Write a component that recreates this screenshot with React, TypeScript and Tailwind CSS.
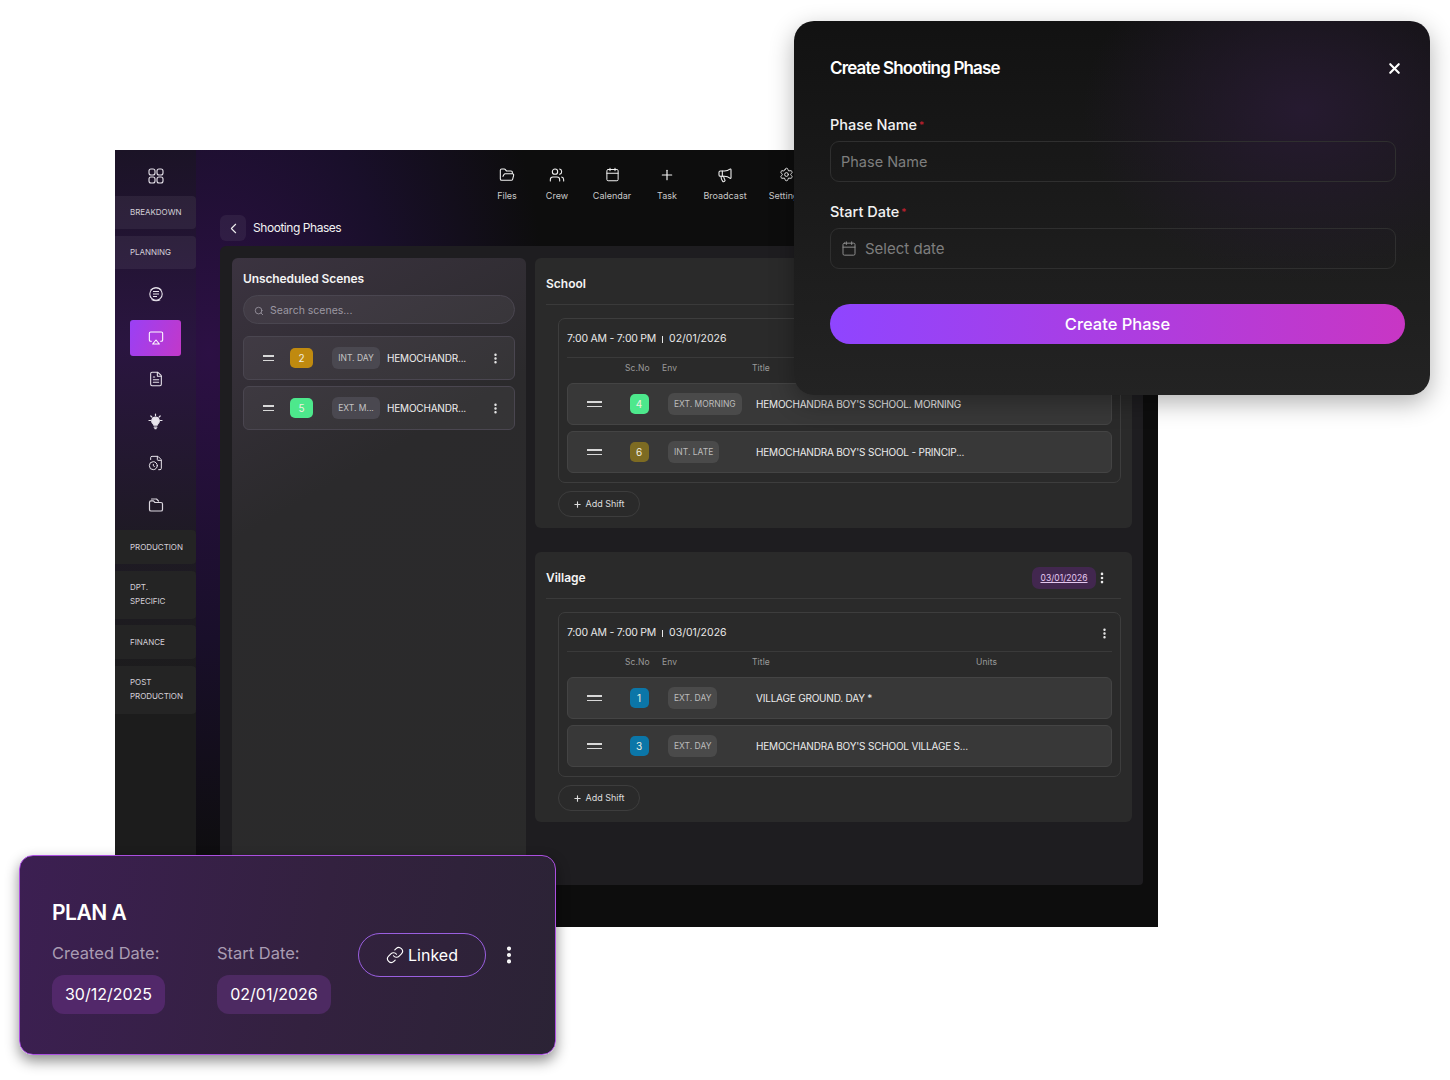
import { Airplay, Calendar, ChevronLeft, FileClock, FileText, FolderOpen, Link, Megaphone, MoreVertical, Plus, Search, Settings, Users, X } from "lucide-react";

type Scene = { no: string; color: string; env: string; title: string };

function Handle({ w }: { w: string }) {
  return (
    <div className={`${w} flex flex-col gap-[3px] shrink-0`}>
      <div className="h-[1.5px] bg-[#d8d8d8]" />
      <div className="h-[1.5px] bg-[#d8d8d8]" />
    </div>
  );
}

function SideLabel({ lines, tint }: { lines: string[]; tint?: boolean }) {
  return (
    <div className={`w-[81px] flex flex-col justify-center gap-[3px] pl-[15px] rounded-r-sm text-[8px] leading-[11px] tracking-[-0.05px] text-[#d4d0d8] ${tint ? "py-[11px] bg-[#ffffff10]" : "py-[11.5px] bg-[#242424]"}`}>
      {lines.map((l) => (
        <span key={l}>{l}</span>
      ))}
    </div>
  );
}

function SideIcon({ children, active }: { children: React.ReactNode; active?: boolean }) {
  return (
    <div className={`w-[51px] ml-[15px] flex items-center justify-center text-[#e8e4ec] ${active ? "h-[36px] rounded-[3px] -mt-[5px] -mb-[8px] bg-[linear-gradient(110deg,#9a40f5,#c238c9)]" : "h-[22px]"}`}>
      {children}
    </div>
  );
}

function NavItem({ icon, label, w }: { icon: React.ReactNode; label: string; w: string }) {
  return (
    <div className={`${w} flex flex-col items-center gap-[8px] text-[9px] leading-[12px] text-[#c9c9c9] shrink-0`}>
      <div className="h-[15px] flex items-center text-[#f2f2f2]">{icon}</div>
      <span>{label}</span>
    </div>
  );
}

function SceneRow({ s }: { s: Scene }) {
  return (
    <div className="h-[42px] flex items-center rounded-[6px] border border-[#444444] bg-[#383838] pl-[19px]">
      <Handle w="w-[15px]" />
      <div className="w-[66px] flex justify-center shrink-0 pl-[8px]">
        <div className={`w-[19px] h-[20px] rounded-[5px] flex items-center justify-center text-[10px] text-[#f1efe0] ${s.color}`}>{s.no}</div>
      </div>
      <div className="w-[88px] shrink-0 flex items-center">
        <span className="h-[22px] flex items-center px-[6px] rounded-[6px] bg-[#4a4a4a] text-[8.5px] text-[#bcbcbc] whitespace-nowrap">{s.env}</span>
      </div>
      <span className="text-[10px] tracking-[-0.2px] text-[#ececec] whitespace-nowrap">{s.title}</span>
    </div>
  );
}

function Section({ title, date, time, day, scenes }: { title: string; date?: string; time: string; day: string; scenes: Scene[] }) {
  return (
    <section className="h-[270px] rounded-[6px] bg-[#2a2a2a] px-[11px]">
      <div className="h-[47px] flex items-center border-b border-[#3a3a3a] pt-[6px]">
        <h3 className="text-[12px] font-semibold text-[#f4f4f4]">{title}</h3>
        {date && (
          <div className="ml-auto flex items-center mr-[12px]">
            <span className="w-[64px] h-[22px] flex items-center justify-center rounded-[7px] bg-[#42274f] text-[8.5px] tracking-[0.05px] text-[#e4c8f0] underline">{date}</span>
            <MoreVertical className="-ml-[1px] w-[14px] h-[14px] text-[#eee]" strokeWidth={2.5} />
          </div>
        )}
      </div>
      <div className="mt-[13px] w-[563px] ml-[12px] rounded-[7px] border border-[#3d3d3d] px-[8px] pb-[9px]">
        <div className="h-[39px] pt-[2px] flex items-center border-b border-[#3a3a3a] text-[10.5px] text-[#e8e8e8]">
          <span className="tracking-[-0.25px]">{time}</span>
          <span className="ml-[6px] w-[1px] h-[7px] bg-[#e8e8e8]" />
          <span className="ml-[6px]">{day}</span>
          <MoreVertical className="w-[13px] h-[13px] ml-auto mr-[1px] text-[#eee]" strokeWidth={2.5} />
        </div>
        <div className="h-[25px] pt-[4px] flex text-[8.5px] leading-[12px] tracking-[0.1px] text-[#9a9a9a]">
          <span className="ml-[58px] w-[37px]">Sc.No</span>
          <span className="w-[90px]">Env</span>
          <span className="w-[224px]">Title</span>
          <span>Units</span>
        </div>
        <div className="flex flex-col gap-[6px]">
          {scenes.map((s) => (
            <SceneRow key={s.no} s={s} />
          ))}
        </div>
      </div>
      <button className="mt-[8px] ml-[12px] h-[26px] w-[82px] flex items-center justify-center gap-[3px] rounded-full border border-[#3d3d3d] text-[9px] text-[#dddddd]">
        <Plus className="w-[9px] h-[9px]" strokeWidth={3} />
        Add Shift
      </button>
    </section>
  );
}

function Unscheduled({ no, color, env }: { no: string; color: string; env: string }) {
  return (
    <div className="h-[44px] flex items-center rounded-[6px] border border-[#4a4650] bg-[#ffffff0d] pl-[19px] pr-[12px]">
      <Handle w="w-[11px]" />
      <div className={`ml-[16px] w-[23px] h-[20px] rounded-[5px] flex items-center justify-center text-[10px] text-[#f1efe0] shrink-0 ${color}`}>{no}</div>
      <span className="ml-[19px] w-[48px] h-[22px] flex items-center justify-center rounded-[6px] bg-[#4a4850] text-[8.5px] text-[#c4c4c4] whitespace-nowrap shrink-0">{env}</span>
      <span className="ml-[7px] text-[10px] tracking-[-0.2px] text-[#efefef] whitespace-nowrap">HEMOCHANDR...</span>
      <MoreVertical className="ml-auto w-[13px] h-[13px] text-[#eee]" strokeWidth={2.5} />
    </div>
  );
}

function ModalField({ label, children }: { label: string; children: React.ReactNode }) {
  return (
    <div className="w-[566px]">
      <label className="block h-[20px] text-[14.5px] leading-[20px] font-medium text-[#f2f2f2]">
        {label}
        <span className="text-[#c0202f] text-[10px] align-top ml-[2px]">*</span>
      </label>
      <div className="mt-[6px] h-[41px] flex items-center gap-[8px] px-[10px] rounded-[9px] border border-[#2f2f2f] text-[14.5px] text-[#7e7e7e]">
        {children}
      </div>
    </div>
  );
}

export default function App() {
  return (
    <div className="relative w-[1450px] h-[1080px] overflow-hidden bg-white font-['Inter','Liberation_Sans',sans-serif]">
      {/* app window */}
      <div className="absolute left-[115px] top-[150px] w-[1043px] h-[777px] flex overflow-hidden bg-[radial-gradient(ellipse_340px_520px_at_9%_26%,#2c1044_0%,#190f2a_55%,#0d0d0d_100%)]">
        <aside className="w-[81px] shrink-0 pt-[18px] flex flex-col bg-[linear-gradient(180deg,#1b1326_0%,#2a1540_25%,#1e1a24_50%,#1c1c1c_70%)]">
          <div className="h-[28px] w-[81px] flex justify-center">
            <svg width="16" height="16" viewBox="0 0 16 16" fill="none" stroke="#e8e4ec" strokeWidth="1.1">
              <rect x="1" y="1" width="6" height="6" rx="2" />
              <rect x="9" y="1" width="6" height="6" rx="2" />
              <rect x="1" y="9" width="6" height="6" rx="2" />
              <rect x="9" y="9" width="6" height="6" rx="2" />
            </svg>
          </div>
          <SideLabel lines={["BREAKDOWN"]} tint />
          <div className="h-[7px]" />
          <SideLabel lines={["PLANNING"]} tint />
          <div className="flex flex-col gap-[20px] mt-[14px]">
            <SideIcon>
              <svg width="16" height="16" viewBox="0 0 16 16" fill="none" stroke="currentColor" strokeWidth="1.1">
                <circle cx="8" cy="8" r="6.2" />
                <path d="M5 5.5h6M5 8h6M5 10.5h4M2.6 4c2.4-2.8 8-3 10.6-.2M3.6 13.4c2.4 1.4 6 1.6 8.6.4" />
              </svg>
            </SideIcon>
            <SideIcon active>
              <Airplay className="w-[16px] h-[16px] text-white" strokeWidth={1.6} />
            </SideIcon>
            <SideIcon>
              <FileText className="w-[16px] h-[16px]" strokeWidth={1.6} />
            </SideIcon>
            <SideIcon>
              <svg width="17" height="17" viewBox="0 0 17 17" fill="none" stroke="#e8e4ec" strokeWidth="1.2" strokeLinecap="round">
                <path d="M8.5 1v1.6M2 7.5h1.8M13.2 7.5H15M3.8 3l1.2 1.2M13.2 3 12 4.2" />
                <path d="M8.5 4.2a3.7 3.7 0 0 0-2.2 6.7c.4.3.6.7.6 1.2h3.2c0-.5.2-.9.6-1.2a3.7 3.7 0 0 0-2.2-6.7z" fill="#e8e4ec" />
                <path d="M7.2 14.2h2.6M7.8 15.6h1.4" />
              </svg>
            </SideIcon>
            <SideIcon>
              <FileClock className="w-[16px] h-[16px]" strokeWidth={1.5} />
            </SideIcon>
            <SideIcon>
              <svg width="16" height="16" viewBox="0 0 16 16" fill="none" stroke="#dcd8e0" strokeWidth="1.2" strokeLinejoin="round">
                <path d="M1.5 5.5c0-1 .6-1.6 1.5-1.6h2.4l1.6 1.6h6c1 0 1.5.6 1.5 1.5v5.4c0 1-.6 1.6-1.5 1.6H3c-.9 0-1.5-.6-1.5-1.6z" />
                <path d="M3.5 2h5l2 2" strokeLinecap="round" />
              </svg>
            </SideIcon>
          </div>
          <div className="flex flex-col gap-[6.5px] mt-[14px]">
            <SideLabel lines={["PRODUCTION"]} />
            <SideLabel lines={["DPT.", "SPECIFIC"]} />
            <SideLabel lines={["FINANCE"]} />
            <SideLabel lines={["POST", "PRODUCTION"]} />
          </div>
        </aside>

        <main className="flex-1 min-w-0 pl-[24px]">
          <div className="h-[96px] relative">
            <div className="flex pt-[17px] pl-[267px]">
              <NavItem w="w-[40px]" label="Files" icon={<FolderOpen className="w-[16px] h-[16px]" strokeWidth={1.6} />} />
              <NavItem w="w-[60px]" label="Crew" icon={<Users className="w-[16px] h-[16px]" strokeWidth={1.6} />} />
              <NavItem w="w-[50px]" label="Calendar" icon={<Calendar className="w-[15px] h-[15px]" strokeWidth={1.6} />} />
              <NavItem w="w-[60px]" label="Task" icon={<Plus className="w-[16px] h-[16px]" strokeWidth={1.8} />} />
              <NavItem w="w-[56px]" label="Broadcast" icon={<Megaphone className="w-[16px] h-[16px]" strokeWidth={1.6} />} />
              <NavItem w="w-[66px]" label="Settings" icon={<Settings className="w-[15px] h-[15px]" strokeWidth={1.6} />} />
            </div>
            <div className="absolute left-0 top-[65px] flex items-center gap-[7px]">
              <div className="w-[26px] h-[26px] rounded-[6px] bg-[#ffffff0f] flex items-center justify-center">
                <ChevronLeft className="w-[17px] h-[17px] text-[#eee]" strokeWidth={1.5} />
              </div>
              <span className="text-[12px] tracking-[-0.45px] text-[#f2f2f2]">Shooting Phases</span>
            </div>
          </div>
          <div className="w-[923px] h-[639px] rounded-t-[6px] rounded-b-[4px] bg-[#1e1d20] flex gap-[9px] pl-[12px] pt-[12px]">
            <div className="w-[294px] h-[640px] rounded-[6px] bg-[linear-gradient(150deg,#3b3340_0%,#2b2a2c_35%,#2a2a2a_100%)] px-[11px]">
              <h2 className="pt-[13px] h-[37px] text-[12px] leading-[16px] font-semibold tracking-[-0.1px] text-[#f4f4f4]">Unscheduled Scenes</h2>
              <div className="h-[29px] pt-[2px] flex items-center gap-[6px] rounded-full border border-[#4a4650] bg-[#ffffff0d] px-[10px] text-[10.5px] text-[#9c98a2]">
                <Search className="w-[10px] h-[10px]" />
                Search scenes...
              </div>
              <div className="mt-[12px] flex flex-col gap-[6px]">
                <Unscheduled no="2" color="bg-[#c08a0f]" env="INT. DAY" />
                <Unscheduled no="5" color="bg-[#4de88c]" env="EXT. M..." />
              </div>
            </div>
            <div className="w-[597px] flex flex-col gap-[24px]">
              <Section
                title="School"
                time="7:00 AM - 7:00 PM"
                day="02/01/2026"
                scenes={[
                  { no: "4", color: "bg-[#4de88c]", env: "EXT. MORNING", title: "HEMOCHANDRA BOY'S SCHOOL. MORNING" },
                  { no: "6", color: "bg-[#7d6b22]", env: "INT. LATE", title: "HEMOCHANDRA BOY'S SCHOOL - PRINCIP..." },
                ]}
              />
              <Section
                title="Village"
                date="03/01/2026"
                time="7:00 AM - 7:00 PM"
                day="03/01/2026"
                scenes={[
                  { no: "1", color: "bg-[#0b76a8]", env: "EXT. DAY", title: "VILLAGE GROUND. DAY *" },
                  { no: "3", color: "bg-[#0b76a8]", env: "EXT. DAY", title: "HEMOCHANDRA BOY'S SCHOOL VILLAGE S..." },
                ]}
              />
            </div>
          </div>
        </main>
      </div>

      {/* create phase dialog */}
      <div className="absolute left-[794px] top-[21px] w-[636px] h-[374px] rounded-[20px] pl-[36px] pt-[36px] bg-[radial-gradient(ellipse_220px_170px_at_80%_24%,#261a30_0%,transparent_100%),linear-gradient(180deg,#121212,#232323)] shadow-[0_8px_24px_rgba(0,0,0,0.3)]">
        <div className="h-[23px] flex items-center justify-between pr-[27px]">
          <h2 className="text-[17px] font-semibold tracking-[-0.85px] text-white">Create Shooting Phase</h2>
          <X className="w-[17px] h-[17px] text-white" strokeWidth={3} />
        </div>
        <div className="mt-[35px] flex flex-col gap-[20px]">
          <ModalField label="Phase Name">Phase Name</ModalField>
          <ModalField label="Start Date">
            <Calendar className="w-[16px] h-[17px] text-[#8c8c8c]" strokeWidth={1.5} />
            <span className="text-[15px] pt-[1px]">Select date</span>
          </ModalField>
        </div>
        <button className="mt-[35px] w-[575px] h-[40px] rounded-full bg-[linear-gradient(90deg,#8f45ff,#c836c4)] text-[16.5px] font-medium text-white">Create Phase</button>
      </div>

      {/* plan card */}
      <div className="absolute left-[19px] top-[855px] w-[537px] h-[200px] rounded-[14px] border-[1.5px] border-[#ab4fe0] bg-[linear-gradient(100deg,#3c1f52_0%,#33213f_55%,#2b2335_100%)] shadow-[0_6px_14px_rgba(0,0,0,0.45)] pl-[32px] pt-[44px]">
        <h2 className="text-[21px] leading-[26px] font-semibold tracking-[-0.5px] text-white">PLAN A</h2>
        <div className="mt-[16px] flex items-start">
          <div className="w-[165px]">
            <p className="text-[16.5px] leading-[22px] text-[#a99cb3]">Created Date:</p>
            <span className="mt-[11px] pb-[1px] flex items-center justify-center h-[39px] w-[113px] rounded-[12px] bg-[#52286a] text-[16px] text-white">30/12/2025</span>
          </div>
          <div className="w-[141px]">
            <p className="text-[16.5px] leading-[22px] text-[#a99cb3]">Start Date:</p>
            <span className="mt-[11px] pb-[1px] flex items-center justify-center h-[39px] w-[114px] rounded-[12px] bg-[#4d2a62] text-[16px] text-white">02/01/2026</span>
          </div>
          <div className="-mt-[9px] flex items-center">
            <button className="w-[128px] h-[44px] flex items-center justify-center gap-[4px] rounded-full border-[1.5px] border-[#9a5fe0] text-[16px] text-white">
              <Link className="w-[18px] h-[18px]" strokeWidth={1.5} />
              Linked
            </button>
            <MoreVertical className="ml-[12px] w-[22px] h-[22px] text-white" strokeWidth={2.5} />
          </div>
        </div>
      </div>
    </div>
  );
}
